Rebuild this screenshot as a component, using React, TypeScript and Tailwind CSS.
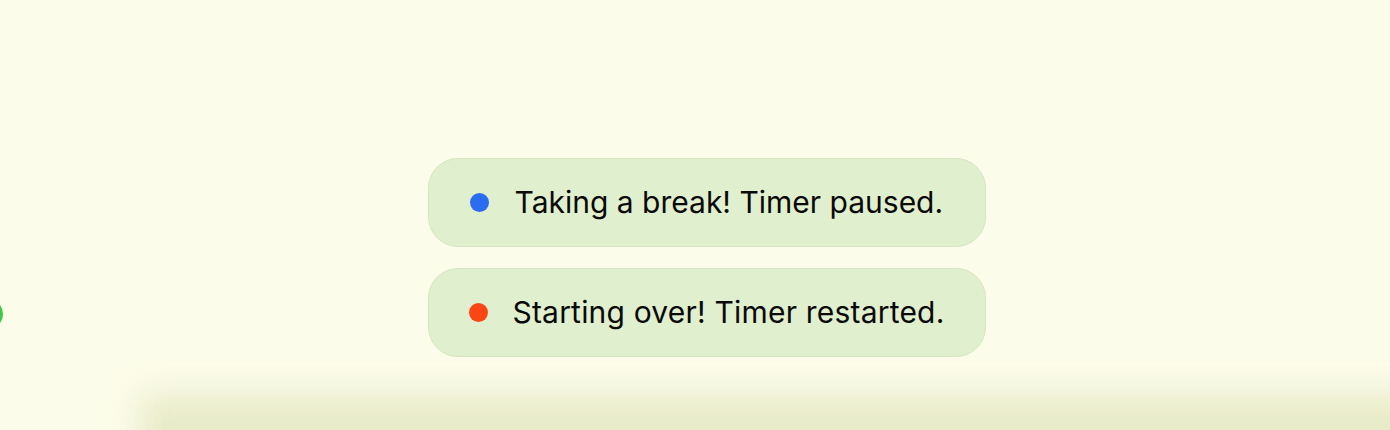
export default function App() {
  return (
    <div className="relative h-[430px] w-[1390px] overflow-hidden bg-[#fcfcea] font-['Inter',sans-serif]">
      {/* soft haze at bottom */}
      <div className="absolute bottom-[-34px] left-[140px] right-[-40px] h-[70px] bg-[#e8ebc8] blur-[16px]" />
      <div className="absolute left-[-29px] top-[298px] h-[32px] w-[32px] rounded-full bg-[#3fc84a]" />

      <div className="flex flex-col items-center gap-[21px] pl-[23px] pt-[158px]">
        <div className="flex h-[89px] w-[558px] items-center gap-[26px] rounded-[30px] border border-[#d6e5c0] bg-[#e0efcd] pl-[41px]">
          <span className="h-[19px] w-[19px] shrink-0 rounded-full bg-[#2a6df0]" />
          <span className="text-[30px] text-[#0a0a0a]">Taking a break! Timer paused.</span>
        </div>
        <div className="flex h-[89px] w-[558px] items-center gap-[25px] rounded-[30px] border border-[#d6e5c0] bg-[#e0efcd] pl-[40px]">
          <span className="h-[19px] w-[19px] shrink-0 rounded-full bg-[#fc4515]" />
          <span className="text-[30px] tracking-[0.2px] text-[#0a0a0a]">Starting over! Timer restarted.</span>
        </div>
      </div>
    </div>
  )
}
